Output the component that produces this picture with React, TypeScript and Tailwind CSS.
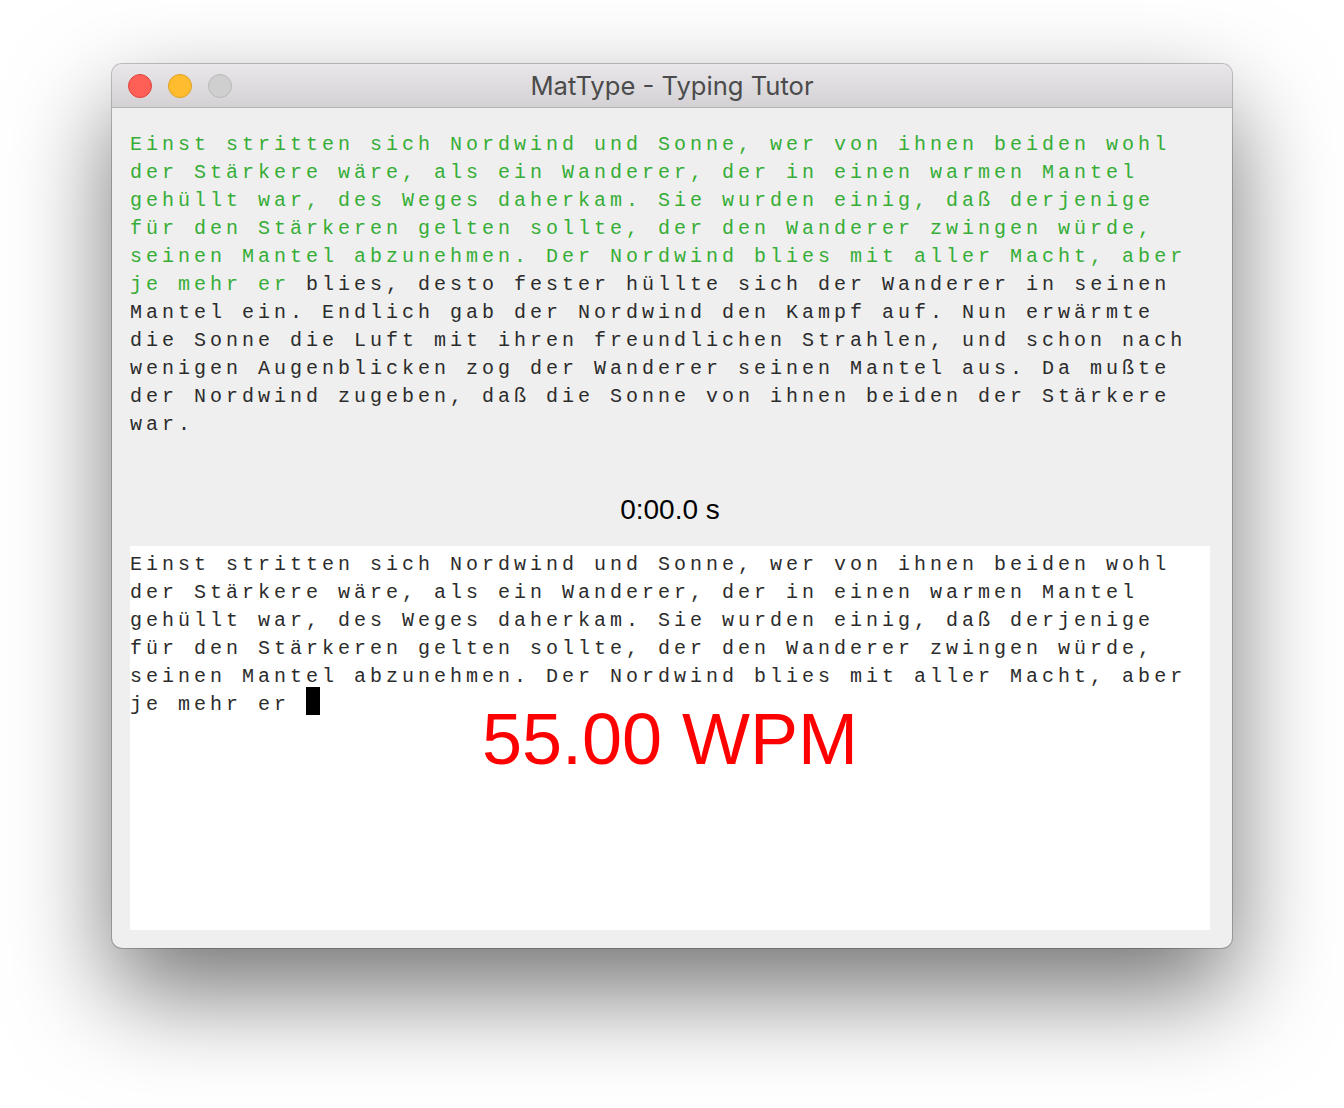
import React from "react";

const topLines = [
  "Einst stritten sich Nordwind und Sonne, wer von ihnen beiden wohl",
  "der Stärkere wäre, als ein Wanderer, der in einen warmen Mantel",
  "gehüllt war, des Weges daherkam. Sie wurden einig, daß derjenige",
  "für den Stärkeren gelten sollte, der den Wanderer zwingen würde,",
  "seinen Mantel abzunehmen. Der Nordwind blies mit aller Macht, aber",
  "je mehr er blies, desto fester hüllte sich der Wanderer in seinen",
  "Mantel ein. Endlich gab der Nordwind den Kampf auf. Nun erwärmte",
  "die Sonne die Luft mit ihren freundlichen Strahlen, und schon nach",
  "wenigen Augenblicken zog der Wanderer seinen Mantel aus. Da mußte",
  "der Nordwind zugeben, daß die Sonne von ihnen beiden der Stärkere",
  "war.",
];

const typedLines = topLines.slice(0, 5);

const mono = "font-['Liberation_Mono','DejaVu_Sans_Mono',monospace] text-[20px] leading-[28px] tracking-[4px] whitespace-pre";

export default function App() {
  return (
    <div className="w-[1344px] h-[1108px] bg-white pt-[64px] pl-[112px]">
      <div className="w-[1120px] h-[884px] rounded-[10px] bg-[#efefef] shadow-[0_44px_100px_rgba(0,0,0,0.55),0_0_0_1px_rgba(0,0,0,0.22)] flex flex-col overflow-hidden">
        {/* Title bar */}
        <div className="relative h-[44px] shrink-0 flex items-center bg-gradient-to-b from-[#e9e7e9] to-[#d3d1d3] border-b border-[#b3b3b3]">
          <div className="flex items-center gap-[16px] pl-[16px]">
            <div className="w-[24px] h-[24px] rounded-full bg-[#fe5f57] border border-[#e0443e]" />
            <div className="w-[24px] h-[24px] rounded-full bg-[#febc2e] border border-[#dea123]" />
            <div className="w-[24px] h-[24px] rounded-full bg-[#d0cfd0] border border-[#b9b8b9]" />
          </div>
          <div className="absolute inset-0 flex items-center justify-center pt-[2px] font-['Inter','Liberation_Sans',sans-serif] text-[25.6px] text-[#4b4b4b]">
            MatType - Typing Tutor
          </div>
        </div>

        {/* Body */}
        <div className="flex-1 flex flex-col pl-[18px] pr-[22px] pt-[23px] pb-[18px]">
          <div className={`${mono} text-[#2c2c2c]`}>
            {topLines.map((line, i) => {
              if (i < 5) {
                return (
                  <div key={i} className="text-[#36ad36]">
                    {line}
                  </div>
                );
              }
              if (i === 5) {
                return (
                  <div key={i}>
                    <span className="text-[#36ad36]">je mehr er</span>
                    {line.slice(10)}
                  </div>
                );
              }
              return <div key={i}>{line}</div>;
            })}
          </div>

          <div className="mt-[55px] h-[32px] leading-[32px] text-center font-['Liberation_Sans','Arial',sans-serif] text-[28px] text-black">
            0:00.0 s
          </div>

          <div className="mt-[20px] relative flex-1 bg-white pt-[5px]">
            <div className={`${mono} text-[#2c2c2c]`}>
              {typedLines.map((line, i) => (
                <div key={i}>{line}</div>
              ))}
              <div>
                je mehr er{" "}
                <span className="relative -top-[4px] inline-block align-top w-[14px] h-[28px] bg-black" />
              </div>
            </div>
            <div className="absolute left-0 right-0 top-[152px] text-center font-['Liberation_Sans','Arial',sans-serif] text-[72px] leading-[82px] text-[#ff0000]">
              55.00 WPM
            </div>
          </div>
        </div>
      </div>
    </div>
  );
}
